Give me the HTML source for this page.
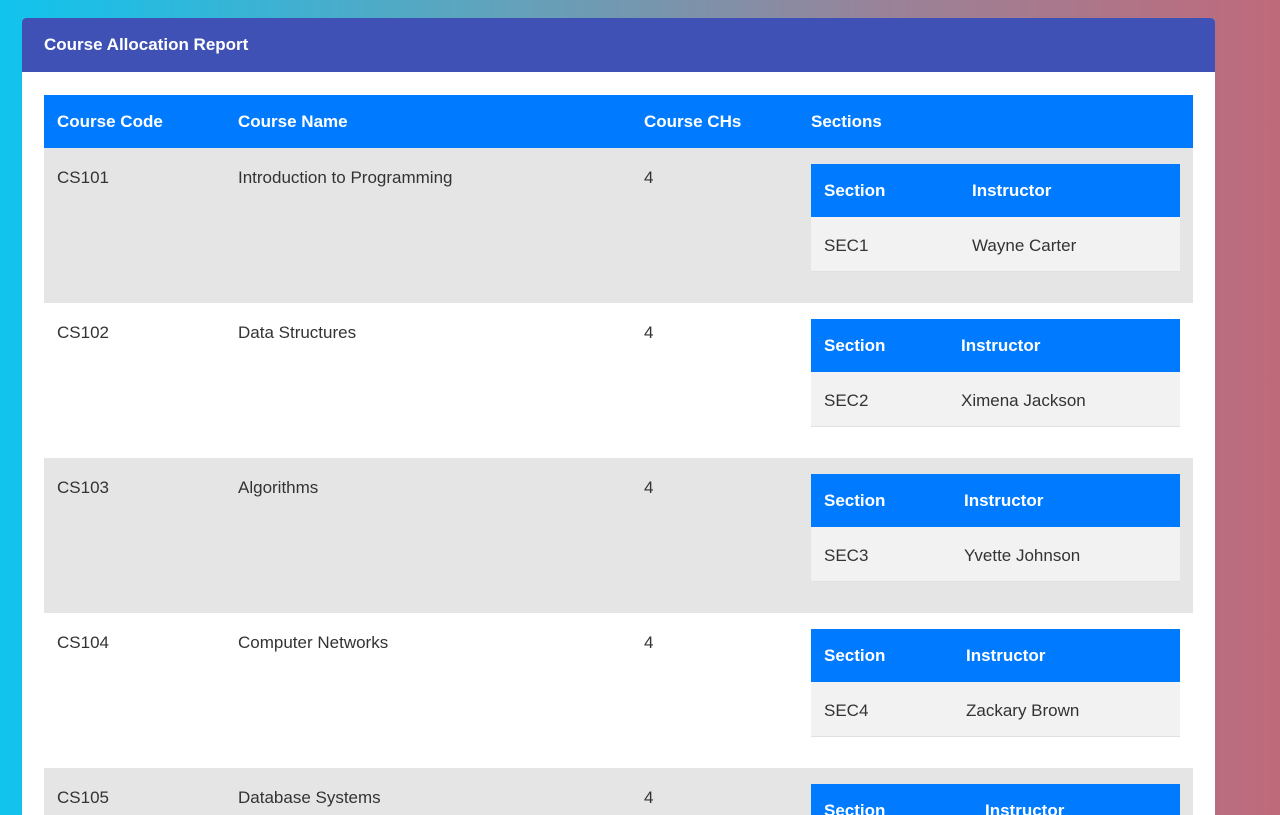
<!DOCTYPE html>
<html><head><style>
*{margin:0;padding:0;box-sizing:border-box}
html,body{width:1280px;height:815px;overflow:hidden}
body{background:linear-gradient(90deg,#10c4ee 0%,#5aa6c0 35%,#9a8298 70%,#bf6a7b 100%);font-family:"Liberation Sans",sans-serif;position:relative}
.card{position:absolute;left:22px;top:18px;width:1193px;height:797px;background:#fff;border-radius:4px 4px 0 0;overflow:hidden}
.hdr{height:54px;background:#3f51b5;color:#fff;font-weight:bold;font-size:17px;line-height:54px;padding-left:22px}
.wrap{position:absolute;left:0;top:0;width:1280px;height:815px;overflow:hidden}
.th{position:absolute;left:44px;top:95px;width:1149px;height:53px;background:#007bff;color:#fff;font-weight:bold;font-size:17px}
.th span,.row span{position:absolute;top:0;line-height:54px}
.row{position:absolute;left:44px;width:1149px;height:155px;font-size:17px;color:#333}
.row>span{line-height:20px;top:20px}
.g{background:#e5e5e5}
.in{position:absolute;left:767px;top:16px;width:369px;height:108px}
.in .h{height:53px;background:#007bff;color:#fff;font-weight:bold;position:relative}
.in .b{height:55px;background:#f2f2f2;position:relative;border-bottom:1px solid #e0e0e0}
.in .b span{line-height:58px}
.in span{position:absolute}
</style></head><body><div class="wrap">
<div class="card"><div class="hdr">Course Allocation Report</div></div>
<div class="th"><span style="left:13px">Course Code</span><span style="left:194px">Course Name</span><span style="left:600px">Course CHs</span><span style="left:767px">Sections</span></div>

<div class="row g" style="top:148px"><span style="left:13px">CS101</span><span style="left:194px">Introduction to Programming</span><span style="left:600px">4</span>
<div class="in"><div class="h"><span style="left:13px">Section</span><span style="left:161px">Instructor</span></div><div class="b"><span style="left:13px">SEC1</span><span style="left:161px">Wayne Carter</span></div></div></div>

<div class="row" style="top:303px"><span style="left:13px">CS102</span><span style="left:194px">Data Structures</span><span style="left:600px">4</span>
<div class="in"><div class="h"><span style="left:13px">Section</span><span style="left:150px">Instructor</span></div><div class="b"><span style="left:13px">SEC2</span><span style="left:150px">Ximena Jackson</span></div></div></div>

<div class="row g" style="top:458px"><span style="left:13px">CS103</span><span style="left:194px">Algorithms</span><span style="left:600px">4</span>
<div class="in"><div class="h"><span style="left:13px">Section</span><span style="left:153px">Instructor</span></div><div class="b"><span style="left:13px">SEC3</span><span style="left:153px">Yvette Johnson</span></div></div></div>

<div class="row" style="top:613px"><span style="left:13px">CS104</span><span style="left:194px">Computer Networks</span><span style="left:600px">4</span>
<div class="in"><div class="h"><span style="left:13px">Section</span><span style="left:155px">Instructor</span></div><div class="b"><span style="left:13px">SEC4</span><span style="left:155px">Zackary Brown</span></div></div></div>

<div class="row g" style="top:768px;height:47px;overflow:hidden"><span style="left:13px">CS105</span><span style="left:194px">Database Systems</span><span style="left:600px">4</span>
<div class="in"><div class="h"><span style="left:13px">Section</span><span style="left:174px">Instructor</span></div></div></div>
</div></body></html>
